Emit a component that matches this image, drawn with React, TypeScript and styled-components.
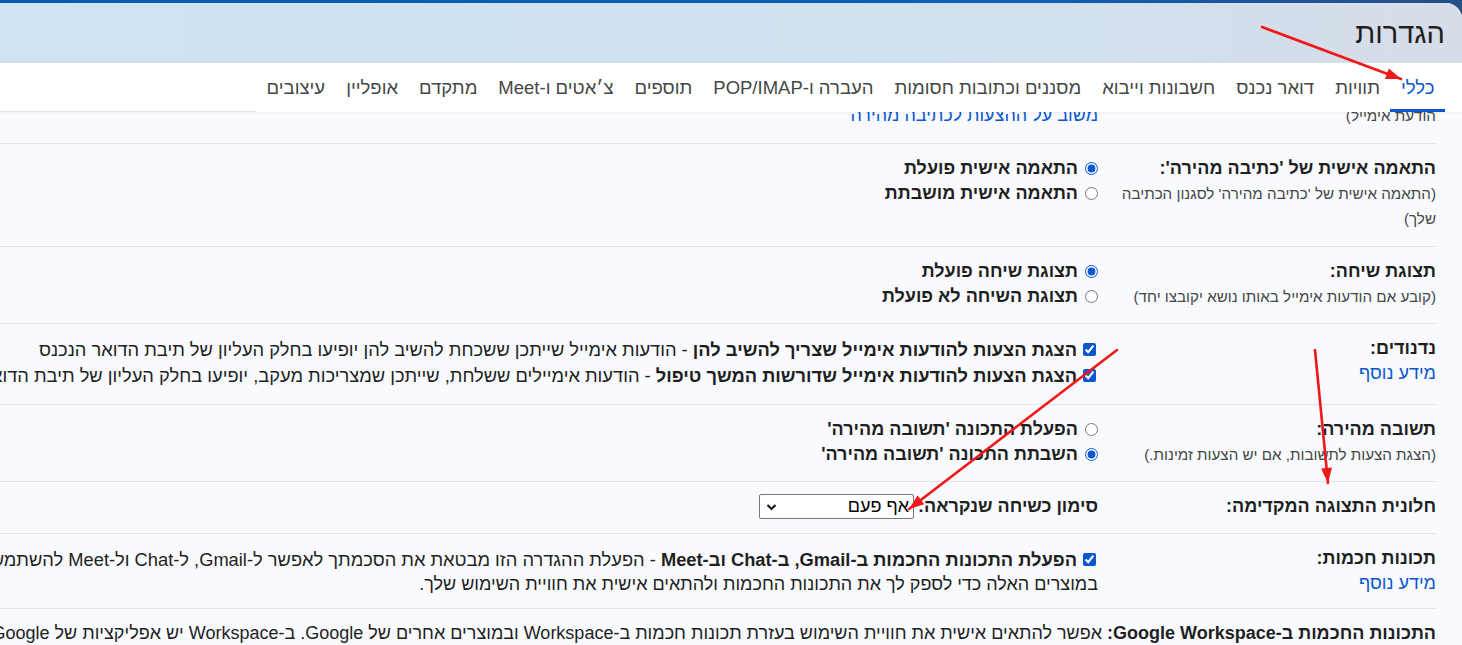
import styled, { createGlobalStyle } from 'styled-components';

const GlobalStyle = createGlobalStyle`
  html, body {
    margin: 0;
    padding: 0;
    overflow: hidden;
  }
  body {
    font-family: "Liberation Sans", Arial, sans-serif;
    background: #0b5cad;
  }
`;

const tabs = [
  'כללי',
  'תוויות',
  'דואר נכנס',
  'חשבונות וייבוא',
  'מסננים וכתובות חסומות',
  'העברה ו-POP/IMAP',
  'תוספים',
  'צ׳אטים ו-Meet',
  'מתקדם',
  'אופליין',
  'עיצובים',
];

type ArrowSpec = { x1: number; y1: number; x2: number; y2: number };

const arrows: ArrowSpec[] = [
  { x1: 1262, y1: 27, x2: 1401, y2: 79 },
  { x1: 1117, y1: 350, x2: 909, y2: 509 },
  { x1: 1315, y1: 350, x2: 1328, y2: 483 },
];

function headPoints({ x1, y1, x2, y2 }: ArrowSpec) {
  const len = Math.hypot(x2 - x1, y2 - y1);
  const dx = (x2 - x1) / len;
  const dy = (y2 - y1) / len;
  const bx = x2 - dx * 15;
  const by = y2 - dy * 15;
  return `${x2},${y2} ${bx - dy * 5.5},${by + dx * 5.5} ${bx + dy * 5.5},${by - dx * 5.5}`;
}

function Chevron() {
  return (
    <svg width="13" height="12" viewBox="0 0 13 12">
      <path d="M2.5 4 L6.5 8 L10.5 4" fill="none" stroke="#111" strokeWidth="2" />
    </svg>
  );
}

export default function App() {
  return (
    <Shell dir="rtl">
      <GlobalStyle />
      <Panel>
        <Header>
          <Title>הגדרות</Title>
        </Header>

        <TabBar>
          {tabs.map((t, i) => (
            <Tab key={t} $active={i === 0}>
              {t}
            </Tab>
          ))}
          <TabFiller />
        </TabBar>

        <Content>
          <RowList>
            <Row $pb={15}>
              <Label>
                <LabelTitle>כתיבה מהירה:</LabelTitle>
                <LabelNote>
                  (הצעות לכתיבה חזויה יופיעו בזמן כתיבת
                  <br />
                  הודעת אימייל)
                </LabelNote>
              </Label>
              <Value>
                <Option>
                  <Radio type="radio" name="sc" defaultChecked />
                  הצעות כתיבה פועלות
                </Option>
                <Option>
                  <Radio type="radio" name="sc" />
                  הצעות כתיבה לא פועלות
                </Option>
                <Link>משוב על ההצעות לכתיבה מהירה</Link>
              </Value>
            </Row>

            <Row $pb={15}>
              <Label>
                <LabelTitle>התאמה אישית של 'כתיבה מהירה':</LabelTitle>
                <LabelNote>(התאמה אישית של 'כתיבה מהירה' לסגנון הכתיבה שלך)</LabelNote>
              </Label>
              <Value>
                <Option>
                  <Radio type="radio" name="scp" defaultChecked />
                  התאמה אישית פועלת
                </Option>
                <Option>
                  <Radio type="radio" name="scp" />
                  התאמה אישית מושבתת
                </Option>
              </Value>
            </Row>

            <Row>
              <Label>
                <LabelTitle>תצוגת שיחה:</LabelTitle>
                <LabelNote>(קובע אם הודעות אימייל באותו נושא יקובצו יחד)</LabelNote>
              </Label>
              <Value>
                <Option>
                  <Radio type="radio" name="cv" defaultChecked />
                  תצוגת שיחה פועלת
                </Option>
                <Option>
                  <Radio type="radio" name="cv" />
                  תצוגת השיחה לא פועלת
                </Option>
              </Value>
            </Row>

            <Row $pb={16}>
              <Label>
                <LabelTitle>נדנודים:</LabelTitle>
                <Link>מידע נוסף</Link>
              </Label>
              <Value>
                <CheckLine>
                  <Check type="checkbox" defaultChecked />
                  <span>
                    <strong>הצגת הצעות להודעות אימייל שצריך להשיב להן</strong>
                    {' - '}הודעות אימייל שייתכן ששכחת להשיב להן יופיעו בחלק העליון של תיבת הדואר הנכנס
                  </span>
                </CheckLine>
                <CheckLine>
                  <Check type="checkbox" defaultChecked />
                  <span>
                    <strong>הצגת הצעות להודעות אימייל שדורשות המשך טיפול</strong>
                    {' - '}הודעות אימיילים ששלחת, שייתכן שמצריכות מעקב, יופיעו בחלק העליון של תיבת הדואר הנכנס
                  </span>
                </CheckLine>
              </Value>
            </Row>

            <Row>
              <Label>
                <LabelTitle>תשובה מהירה:</LabelTitle>
                <LabelNote>(הצגת הצעות לתשובות, אם יש הצעות זמינות.)</LabelNote>
              </Label>
              <Value>
                <Option>
                  <Radio type="radio" name="sr" />
                  הפעלת התכונה 'תשובה מהירה'
                </Option>
                <Option>
                  <Radio type="radio" name="sr" defaultChecked />
                  השבתת התכונה 'תשובה מהירה'
                </Option>
              </Value>
            </Row>

            <Row>
              <Label>
                <LabelTitle>חלונית התצוגה המקדימה:</LabelTitle>
              </Label>
              <Value>
                <SelectLine>
                  <strong>סימון כשיחה שנקראה:</strong>
                  <SelectBox>
                    <span>אף פעם</span>
                    <Chevron />
                  </SelectBox>
                </SelectLine>
              </Value>
            </Row>

            <Row $pb={11}>
              <Label>
                <LabelTitle>תכונות חכמות:</LabelTitle>
                <Link>מידע נוסף</Link>
              </Label>
              <Value>
                <CheckLine>
                  <Check type="checkbox" defaultChecked />
                  <span>
                    <strong>הפעלת התכונות החכמות ב-Gmail, ב-Chat וב-Meet</strong>
                    {' - '}הפעלת ההגדרה הזו מבטאת את הסכמתך לאפשר ל-Gmail, ל-Chat ול-Meet להשתמש בתוכן ובפעילות שלך
                  </span>
                </CheckLine>
                <PlainLine>במוצרים האלה כדי לספק לך את התכונות החכמות ולהתאים אישית את חוויית השימוש שלך.</PlainLine>
              </Value>
            </Row>

            <WideRow>
              <strong>התכונות החכמות ב-Google Workspace:</strong> אפשר להתאים אישית את חוויית השימוש בעזרת תכונות
              חכמות ב-Workspace ובמוצרים אחרים של Google. ב-Workspace יש אפליקציות של Google כמו Docs, Drive ו-Calendar
            </WideRow>
          </RowList>
        </Content>
      </Panel>

      <Annotations viewBox="0 0 1462 645">
        {arrows.map((a, i) => (
          <g key={i}>
            <line x1={a.x1} y1={a.y1} x2={a.x2} y2={a.y2} stroke="#f01818" strokeWidth="2.6" strokeLinecap="round" />
            <polygon points={headPoints(a)} fill="#f01818" />
          </g>
        ))}
      </Annotations>
    </Shell>
  );
}

const Shell = styled.div`
  position: relative;
  height: 645px;
  width: 1462px;
  padding-top: 3px;
  box-sizing: border-box;
  display: flex;
  flex-direction: column;
  background: linear-gradient(90deg, #0b5cad, #0d5fb3 70%, #254f86);
  overflow: hidden;
`;

const Panel = styled.div`
  flex: 1;
  min-height: 0;
  display: flex;
  flex-direction: column;
  border-top-right-radius: 16px;
  overflow: hidden;
  background: #f8fafd;
`;

const Header = styled.header`
  height: 60px;
  flex-shrink: 0;
  display: flex;
  align-items: center;
  padding: 0 17px;
  background: linear-gradient(90deg, #cfe3f2 0%, #d0e1f0 55%, #d5dde8 100%);
`;

const Title = styled.h1`
  margin: 0;
  font-size: 29px;
  font-weight: 400;
  color: #1f1f1f;
  line-height: 1;
`;

const TabBar = styled.nav`
  height: 49px;
  flex-shrink: 0;
  display: flex;
  align-items: stretch;
  padding-right: 17px;
  background: #ffffff;
  box-shadow: 0 1px 3px rgba(60, 64, 67, 0.06);
  position: relative;
  z-index: 1;
`;

const Tab = styled.div<{ $active?: boolean }>`
  display: flex;
  align-items: center;
  padding: 0 10.5px;
  font-size: 18.5px;
  white-space: nowrap;
  color: ${(p) => (p.$active ? '#0b57d0' : '#444746')};
  box-shadow: ${(p) => (p.$active ? 'inset 0 -3px 0 #0b57d0' : 'none')};
`;

const TabFiller = styled.div`
  flex: 1;
  border-bottom: 1px solid #e3e6ea;
`;

const Content = styled.main`
  flex: 1;
  min-height: 0;
  overflow: hidden;
  padding-right: 26px;
`;

const RowList = styled.div`
  margin-top: -71px;
`;

const Row = styled.section<{ $pb?: number }>`
  display: grid;
  grid-template-columns: 322px 1fr;
  column-gap: 16px;
  padding: 12px 0 ${(p) => p.$pb ?? 14}px;
  border-bottom: 1px solid #e1e3e6;
  font-size: 18px;
  line-height: 25px;
  color: #1f1f1f;
`;

const WideRow = styled.section`
  padding: 12px 0 15px;
  font-size: 18px;
  line-height: 25px;
  color: #1f1f1f;
  white-space: nowrap;
`;

const Label = styled.div`
  display: flex;
  flex-direction: column;
`;

const LabelTitle = styled.div`
  font-weight: 700;
  color: #1f1f1f;
`;

const LabelNote = styled.div`
  font-size: 15.2px;
  color: #444746;
`;

const Link = styled.a`
  color: #0b57d0;
  cursor: pointer;
  white-space: nowrap;
`;

const Value = styled.div`
  display: flex;
  flex-direction: column;
  align-items: flex-start;
  min-width: 0;
`;

const Option = styled.label`
  display: flex;
  align-items: center;
  gap: 7px;
  height: 25px;
  font-weight: 700;
  white-space: nowrap;
`;

const Radio = styled.input`
  margin: 0;
  width: 13px;
  height: 13px;
  accent-color: #0b57d0;
`;

const CheckLine = styled.label`
  display: flex;
  align-items: center;
  gap: 6px;
  height: 26px;
  white-space: nowrap;
  padding-right: 2px;
  font-size: 18.3px;

  strong {
    font-weight: 700;
  }
`;

const Check = styled.input`
  margin: 0;
  width: 13px;
  height: 13px;
  accent-color: #0b57d0;
  flex-shrink: 0;
`;

const PlainLine = styled.div`
  white-space: nowrap;
`;

const SelectLine = styled.div`
  display: flex;
  align-items: center;
  gap: 4px;
  height: 25px;
  white-space: nowrap;
`;

const SelectBox = styled.div`
  width: 155px;
  height: 25px;
  box-sizing: border-box;
  border: 1px solid #767676;
  border-radius: 2px;
  background: #ffffff;
  display: flex;
  align-items: center;
  justify-content: space-between;
  padding: 0 4px 0 5px;
  font-size: 18px;
  color: #000;
`;

const Annotations = styled.svg`
  position: absolute;
  inset: 0;
  z-index: 5;
  width: 1462px;
  height: 645px;
  pointer-events: none;
`;
